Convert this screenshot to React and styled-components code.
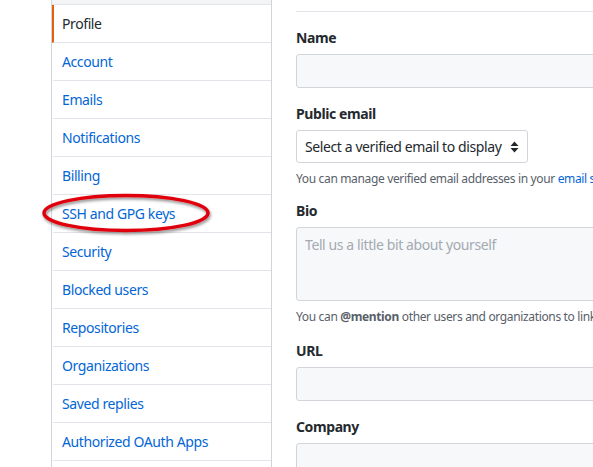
import React from 'react';
import styled, { createGlobalStyle } from 'styled-components';

const GlobalStyle = createGlobalStyle`
  html, body {
    margin: 0;
    padding: 0;
    background: #fff;
    overflow: hidden;
  }
  body {
    font-family: "Noto Sans", "Open Sans", sans-serif;
    font-size: 14px;
    letter-spacing: -0.4px;
    color: #24292e;
  }
`;

const Page = styled.div`
  display: flex;
  align-items: flex-start;
  gap: 24px;
  padding-left: 51px;
  width: 900px;
`;

const Sidebar = styled.nav`
  position: relative;
  width: 219px;
  flex-shrink: 0;
  padding-bottom: 20px;
  border: 1px solid #d1d5da;
  border-top: none;
`;

const SidebarHead = styled.div`
  height: 4px;
  background: #f3f4f6;
  border-bottom: 1px solid #e1e4e8;
`;

const MenuItem = styled.a`
  display: block;
  height: 37px;
  line-height: 37px;
  padding-left: 8px;
  border-bottom: 1px solid #e1e4e8;
  border-left: 2px solid ${p => (p.$active ? '#e36209' : 'transparent')};
  color: ${p => (p.$active ? '#24292e' : '#0366d6')};
  text-decoration: none;
  font-size: 14px;
  white-space: nowrap;
`;

const Highlight = styled.svg`
  position: absolute;
  left: -11px;
  top: 188px;
  overflow: visible;
  pointer-events: none;
`;

const Main = styled.main`
  width: 520px;
  flex-shrink: 0;
`;

const Divider = styled.div`
  margin-top: 11px;
  border-top: 1px solid #e1e4e8;
`;

const Group = styled.div`
  margin-top: ${p => p.$mt || 16}px;
`;

const Label = styled.label`
  display: block;
  height: 20px;
  line-height: 20px;
  font-weight: 700;
  font-size: 14px;
  margin-bottom: 6px;
`;

const Input = styled.div`
  box-sizing: border-box;
  width: 440px;
  height: ${p => p.$h || 34}px;
  background: #f6f8fa;
  border: 1px solid #d1d5da;
  border-radius: 3px;
  padding: 7px 8px;
  color: #a3aab1;
  font-size: 14px;
  line-height: 20px;
`;

const Select = styled.div`
  box-sizing: border-box;
  display: inline-flex;
  align-items: center;
  justify-content: space-between;
  width: 232px;
  height: 33px;
  padding: 0 8px;
  background: #fff;
  border: 1px solid #d1d5da;
  border-radius: 3px;
  font-size: 14px;
  color: #24292e;
  white-space: nowrap;
`;

const Note = styled.p`
  margin: 7px 0 -3px;
  height: 18px;
  line-height: 18px;
  font-size: 12px;
  letter-spacing: -0.35px;
  color: #586069;
  white-space: nowrap;
`;

const NoteLink = styled.a`
  color: #0366d6;
  text-decoration: none;
`;

const items = [
  'Profile',
  'Account',
  'Emails',
  'Notifications',
  'Billing',
  'SSH and GPG keys',
  'Security',
  'Blocked users',
  'Repositories',
  'Organizations',
  'Saved replies',
  'Authorized OAuth Apps',
];

const SortArrows = () => (
  <svg width="9" height="12" viewBox="0 0 9 12">
    <path d="M4.5 0.5 L8.5 5 H0.5 Z M4.5 11.5 L8.5 7 H0.5 Z" fill="#24292e" />
  </svg>
);

export default function App() {
  return (
    <>
      <GlobalStyle />
      <Page>
        <Sidebar>
          <SidebarHead />
          {items.map((item, i) => (
            <MenuItem key={item} $active={i === 0}>
              {item}
            </MenuItem>
          ))}
          <Highlight width="170" height="50" viewBox="0 0 170 50">
            <defs>
              <filter id="shadow" x="-10%" y="-30%" width="120%" height="170%">
                <feDropShadow dx="1" dy="2" stdDeviation="1.5" floodColor="#000" floodOpacity="0.45" />
              </filter>
            </defs>
            <ellipse cx="85" cy="25" rx="82" ry="17.5" fill="none" stroke="#e0000b" strokeWidth="3.5" filter="url(#shadow)" />
          </Highlight>
        </Sidebar>
        <Main>
          <Divider />
          <Group>
            <Label>Name</Label>
            <Input />
          </Group>
          <Group>
            <Label>Public email</Label>
            <Select>
              Select a verified email to display
              <SortArrows />
            </Select>
            <Note>
              You can manage verified email addresses in your <NoteLink>email settings</NoteLink>.
            </Note>
          </Group>
          <Group>
            <Label>Bio</Label>
            <Input $h={74}>Tell us a little bit about yourself</Input>
            <Note>
              You can <strong>@mention</strong> other users and organizations to link to them.
            </Note>
          </Group>
          <Group $mt={18}>
            <Label>URL</Label>
            <Input />
          </Group>
          <Group>
            <Label>Company</Label>
            <Input />
          </Group>
        </Main>
      </Page>
    </>
  );
}
